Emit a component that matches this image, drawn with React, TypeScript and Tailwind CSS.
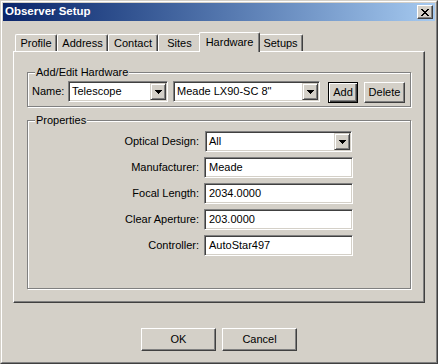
import React from 'react';

const sunken =
  'border border-t-[#808080] border-l-[#808080] border-b-white border-r-white shadow-[inset_1px_1px_0_#404040,inset_-1px_-1px_0_#d4d0c8] bg-white';
const raised =
  'border border-t-white border-l-white border-b-[#404040] border-r-[#404040] shadow-[inset_-1px_-1px_0_#808080] bg-[#d4d0c8]';

const Arrow = () => (
  <svg width="7" height="4" viewBox="0 0 7 4" shapeRendering="crispEdges">
    <rect x="0" y="0" width="7" height="1" fill="#000" />
    <rect x="1" y="1" width="5" height="1" fill="#000" />
    <rect x="2" y="2" width="3" height="1" fill="#000" />
    <rect x="3" y="3" width="1" height="1" fill="#000" />
  </svg>
);

const Combo = ({ value, className }: { value: string; className: string }) => (
  <div className={`${sunken} ${className} h-[21px] flex p-px`}>
    <span className="flex-1 flex items-center pl-[2px] whitespace-nowrap overflow-hidden">{value}</span>
    <div className="w-[16px] h-full flex items-center justify-center border border-t-[#d4d0c8] border-l-[#d4d0c8] border-b-[#404040] border-r-[#404040] shadow-[inset_1px_1px_0_#fff,inset_-1px_-1px_0_#808080] bg-[#d4d0c8]">
      <Arrow />
    </div>
  </div>
);

const TextBox = ({ value }: { value: string }) => (
  <div className={`${sunken} w-[149px] h-[21px] flex items-center pl-[4px]`}>{value}</div>
);

const GroupBox = ({
  label,
  className,
  children,
}: {
  label: string;
  className: string;
  children: React.ReactNode;
}) => (
  <div className={`relative border border-[#808080] shadow-[inset_1px_1px_0_#fff,1px_1px_0_#fff] ${className}`}>
    <span className="absolute left-[7px] top-[-8px] px-px bg-[#d4d0c8] leading-[14px]">{label}</span>
    {children}
  </div>
);

const tabs = [
  { name: 'Profile', w: 'w-[42px]' },
  { name: 'Address', w: 'w-[51px]' },
  { name: 'Contact', w: 'w-[50px]' },
  { name: 'Sites', w: 'w-[43px]' },
  { name: 'Hardware', w: 'w-[61px]', active: true },
  { name: 'Setups', w: 'w-[45px]' },
];

const props = [
  { label: 'Manufacturer:', value: 'Meade' },
  { label: 'Focal Length:', value: '2034.0000' },
  { label: 'Clear Aperture:', value: '203.0000' },
  { label: 'Controller:', value: 'AutoStar497' },
];

export default function App() {
  return (
    <div className="w-[438px] h-[364px] bg-[#d4d0c8] border border-t-[#d4d0c8] border-l-[#d4d0c8] border-b-[#404040] border-r-[#404040] font-['Liberation_Sans',Arial,sans-serif] text-[11px] text-black overflow-hidden">
      <div className="h-full border border-t-white border-l-white border-b-[#808080] border-r-[#808080] p-px flex flex-col">
        {/* title bar */}
        <div className="h-[18px] flex items-center justify-between pl-[2px] pr-[2px] bg-gradient-to-r from-[#0a246a] to-[#a6caf0]">
          <span className="text-white font-bold text-[11.5px]">Observer Setup</span>
          <div className={`${raised} w-[16px] h-[14px] flex items-center justify-center`}>
            <svg width="8" height="7" viewBox="0 0 8 7" shapeRendering="crispEdges">
              <rect x="0" y="0" width="2" height="1" fill="#000" />
              <rect x="6" y="0" width="2" height="1" fill="#000" />
              <rect x="1" y="1" width="2" height="1" fill="#000" />
              <rect x="5" y="1" width="2" height="1" fill="#000" />
              <rect x="2" y="2" width="4" height="1" fill="#000" />
              <rect x="3" y="3" width="2" height="1" fill="#000" />
              <rect x="2" y="4" width="4" height="1" fill="#000" />
              <rect x="1" y="5" width="2" height="1" fill="#000" />
              <rect x="5" y="5" width="2" height="1" fill="#000" />
              <rect x="0" y="6" width="2" height="1" fill="#000" />
              <rect x="6" y="6" width="2" height="1" fill="#000" />
            </svg>
          </div>
        </div>

        <div className="px-[10px] pt-[11px] flex flex-col">
          {/* tabs */}
          <div className="h-[19px] flex items-end pl-[2px]">
            {tabs.map((t) =>
              t.active ? (
                <div
                  key={t.name}
                  className={`${t.w} h-[20px] -mx-[2px] -mb-px relative z-10 bg-[#d4d0c8] border-t border-l border-t-white border-l-white border-r border-r-[#404040] shadow-[inset_-1px_0_0_#808080] rounded-tl-[2px] rounded-tr-[2px] flex items-center justify-center`}
                >
                  {t.name}
                </div>
              ) : (
                <div
                  key={t.name}
                  className={`${t.w} h-[17px] bg-[#d4d0c8] border-t border-l border-t-white border-l-white border-r border-r-[#404040] shadow-[inset_-1px_0_0_#808080] rounded-tl-[2px] rounded-tr-[2px] flex items-center justify-center pt-px`}
                >
                  {t.name}
                </div>
              )
            )}
          </div>

          {/* panel */}
          <div className="h-[252px] border border-t-white border-l-white border-b-[#404040] border-r-[#404040] shadow-[inset_-1px_-1px_0_#808080] px-[13px] pt-[20px]">
            <GroupBox label="Add/Edit Hardware" className="h-[35px] pt-[8px] pl-[4px]">
              <div className="flex items-start">
                <span className="w-[36px] h-[21px] flex items-center">Name:</span>
                <Combo value="Telescope" className="w-[100px]" />
                <Combo value={'Meade LX90-SC 8"'} className="w-[147px] ml-[5px]" />
                <button className="ml-[8px] mt-px w-[30px] h-[21px] border border-black bg-[#d4d0c8] shadow-[inset_1px_1px_0_#fff,inset_-1px_-1px_0_#404040,inset_-2px_-2px_0_#808080] flex items-center justify-center">
                  Add
                </button>
                <button className={`${raised} ml-[6px] mt-px w-[41px] h-[21px] flex items-center justify-center`}>
                  Delete
                </button>
              </div>
            </GroupBox>

            <GroupBox label="Properties" className="mt-[13px] h-[169px] pt-[10px]">
              <div className="flex flex-col gap-[5px]">
                <div className="flex items-center">
                  <span className="w-[171px] text-right">Optical Design:</span>
                  <Combo value="All" className="w-[147px] ml-[6px]" />
                </div>
                {props.map((p) => (
                  <div key={p.label} className="flex items-center">
                    <span className="w-[171px] text-right">{p.label}</span>
                    <div className="ml-[5px]">
                      <TextBox value={p.value} />
                    </div>
                  </div>
                ))}
              </div>
            </GroupBox>
          </div>

          {/* dialog buttons */}
          <div className="mt-[25px] flex justify-center gap-[6px]">
            <button className={`${raised} w-[75px] h-[23px] flex items-center justify-center`}>OK</button>
            <button className={`${raised} w-[75px] h-[23px] flex items-center justify-center`}>Cancel</button>
          </div>
        </div>
      </div>
    </div>
  );
}
